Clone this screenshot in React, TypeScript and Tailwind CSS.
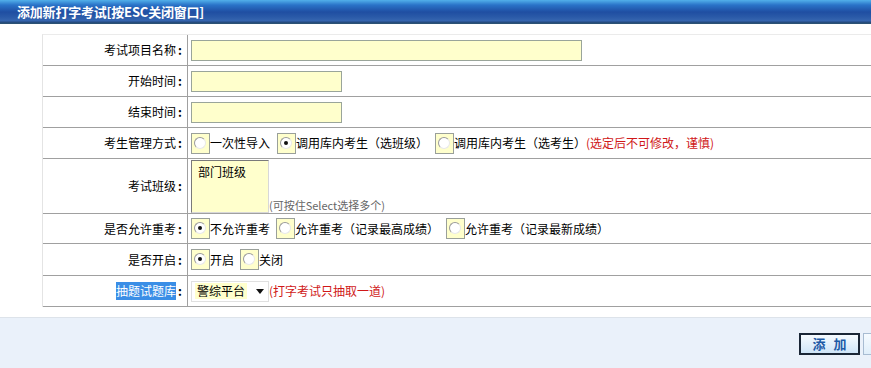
import React from "react";

const Radio = ({ checked }: { checked?: boolean }) => (
  <span className="inline-flex w-[19px] h-[21px] shrink-0 bg-[#ffffcc] border border-[#9aa09a] items-start justify-start pl-[2px] pt-[3px]">
    <span className="w-[12px] h-[12px] rounded-full bg-white border border-[#9a9a9a] border-b-[#e8e8e8] border-r-[#e8e8e8] flex items-center justify-center">
      {checked && <span className="w-[4px] h-[4px] rounded-full bg-[#111]" />}
    </span>
  </span>
);

const Row = ({
  label,
  h,
  children,
  highlight,
}: {
  label: string;
  h: string;
  children: React.ReactNode;
  highlight?: boolean;
}) => (
  <div className={`flex ${h} border-b border-[#a0a0a0]`}>
    <div className="w-[145px] shrink-0 border-r border-[#a0a0a0] flex items-center justify-end pr-[5px]">
      {highlight ? (
        <span className="bg-[#3a8ee6] text-white">{label}</span>
      ) : (
        <span>{label}</span>
      )}
      <span className="ml-[2px] font-bold">:</span>
    </div>
    <div className="flex-1 flex items-center pl-[3px]">{children}</div>
  </div>
);

export default function App() {
  return (
    <div
      className="w-[871px] h-[368px] overflow-hidden bg-white text-[12px] text-black flex flex-col"
      style={{ fontFamily: '"Noto Sans CJK SC", "Noto Sans", sans-serif' }}
    >
      <div className="h-[24px] shrink-0 bg-[linear-gradient(to_bottom,#52b0ea_0px,#2a73c8_5px,#1f4ea2_12px,#2a5aa8_17px,#3766b0_21px,#244a80_22px,#2f5570_24px)] flex items-center pl-[17px]">
        <span className="text-white font-bold text-[13px] tracking-[-0.2px]">添加新打字考试[按ESC关闭窗口]</span>
      </div>
      <div className="mt-[10px] ml-[42px] border-t border-[#ebebeb] border-l border-l-[#e4e4e4]">
        <Row label="考试项目名称" h="h-[31px]">
          <div className="w-[391px] h-[21px] bg-[#ffffcc] border border-[#9aa59a]" />
        </Row>
        <Row label="开始时间" h="h-[31px]">
          <div className="w-[151px] h-[21px] bg-[#ffffcc] border border-[#9aa59a]" />
        </Row>
        <Row label="结束时间" h="h-[31px]">
          <div className="w-[151px] h-[21px] bg-[#ffffcc] border border-[#9aa59a]" />
        </Row>
        <Row label="考生管理方式" h="h-[31px]">
          <div className="flex items-center">
            <Radio />
            <span className="mr-[7px]">一次性导入</span>
            <Radio checked />
            <span className="mr-[7px]">调用库内考生（选班级）</span>
            <Radio />
            <span>调用库内考生（选考生）</span>
            <span className="text-[#d01818]">(选定后不可修改，谨慎)</span>
          </div>
        </Row>
        <Row label="考试班级" h="h-[55px]">
          <div className="flex items-end">
            <div className="w-[78px] h-[53px] bg-[#ffffcc] border border-[#7a7a7a] border-r-[#d8d8d8] border-b-[#d8d8d8] pl-[6px] pt-[2px]">
              部门班级
            </div>
            <span className="text-[#666] text-[11px] leading-[13px] mb-[1px]">(可按住Select选择多个)</span>
          </div>
        </Row>
        <Row label="是否允许重考" h="h-[30px]">
          <div className="flex items-center">
            <Radio checked />
            <span className="mr-[6px]">不允许重考</span>
            <Radio />
            <span className="mr-[7px]">允许重考（记录最高成绩）</span>
            <Radio />
            <span>允许重考（记录最新成绩）</span>
          </div>
        </Row>
        <Row label="是否开启" h="h-[32px]">
          <div className="flex items-center">
            <Radio checked />
            <span className="mr-[6px]">开启</span>
            <Radio />
            <span>关闭</span>
          </div>
        </Row>
        <Row label="抽题试题库" h="h-[31px]" highlight>
          <div className="flex items-center">
            <div className="w-[78px] h-[21px] bg-white border border-[#e0e0e0] flex items-center pl-[3px] pr-[4px] justify-between">
              <span className="bg-[#ffffcc] px-[2px] leading-[16px]">警综平台</span>
              <svg width="8" height="5" viewBox="0 0 8 5">
                <path d="M0 0 L8 0 L4 5 Z" fill="#111" />
              </svg>
            </div>
            <span className="text-[#d01818]">(打字考试只抽取一道)</span>
          </div>
        </Row>
      </div>
      <div className="mt-[10px] border-t border-[#dde3ea] bg-[#eaf1fa] flex-1 flex justify-end items-start pt-[15px] gap-[3px]">
        <button className="w-[61px] h-[22px] border-2 border-[#1a2636] bg-[linear-gradient(to_bottom,#f6fbff,#cfe5f8)] text-[#1d5aa6] font-bold text-[13px] flex items-center justify-center tracking-[8px] pl-[8px]">
          添加
        </button>
        <div className="w-[8px] h-[22px] border border-[#a8bcd2] border-r-0 bg-[linear-gradient(to_bottom,#f6fbff,#dfeefa)]" />
      </div>
    </div>
  );
}
